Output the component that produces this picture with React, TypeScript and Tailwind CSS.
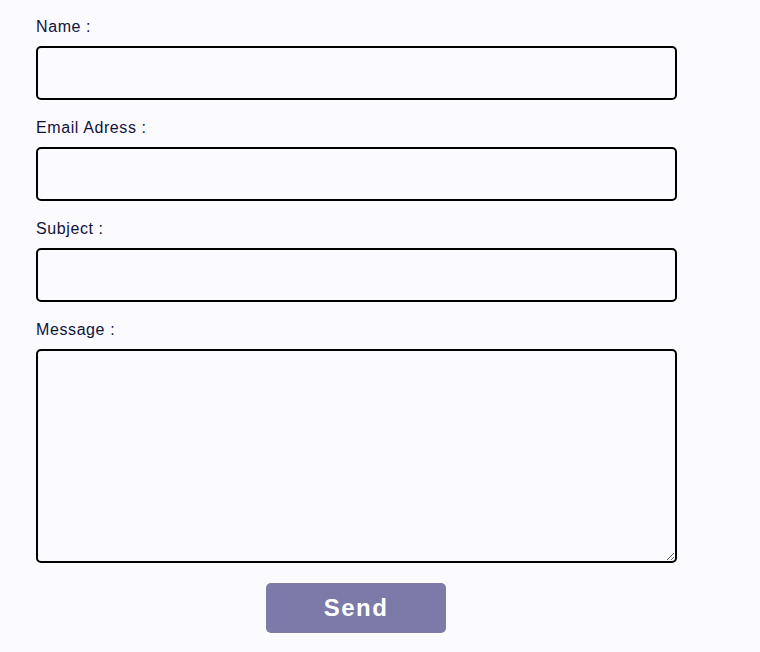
import React from "react"

const fields = [
  { id: "name", label: "Name :", type: "text" },
  { id: "email", label: "Email Adress :", type: "email" },
  { id: "subject", label: "Subject :", type: "text" },
]

export default function App() {
  return (
    <div className="min-h-screen w-full bg-[#fafaff] font-['Liberation_Sans',sans-serif]">
      <form className="w-[641px] ml-[36px] pt-[17px] flex flex-col" onSubmit={(e) => e.preventDefault()}>
        {fields.map((f, i) => (
          <div key={f.id} className={`flex flex-col ${i > 0 ? "mt-[18px]" : ""}`}>
            <label htmlFor={f.id} className="text-[16px] leading-[20px] tracking-[0.6px] font-medium text-[#12123a] mb-[9px]">
              {f.label}
            </label>
            <input
              id={f.id}
              type={f.type}
              className="h-[54px] w-full rounded-[5px] border-2 border-black bg-[#fafaff] px-3 outline-none"
            />
          </div>
        ))}

        <div className="flex flex-col mt-[18px]">
          <label htmlFor="message" className="text-[16px] leading-[20px] tracking-[0.6px] font-medium text-[#12123a] mb-[9px]">
            Message :
          </label>
          <textarea
            id="message"
            className="h-[214px] w-full rounded-[5px] border-2 border-black bg-[#fafaff] px-3 py-2 outline-none"
          />
        </div>

        <div className="flex justify-center mt-[20px]">
          <button
            type="submit"
            className="w-[180px] h-[50px] mr-px rounded-[5px] bg-[#7b7aa8] text-white text-[24px] font-semibold tracking-[1.5px]"
          >
            Send
          </button>
        </div>
      </form>
    </div>
  )
}
